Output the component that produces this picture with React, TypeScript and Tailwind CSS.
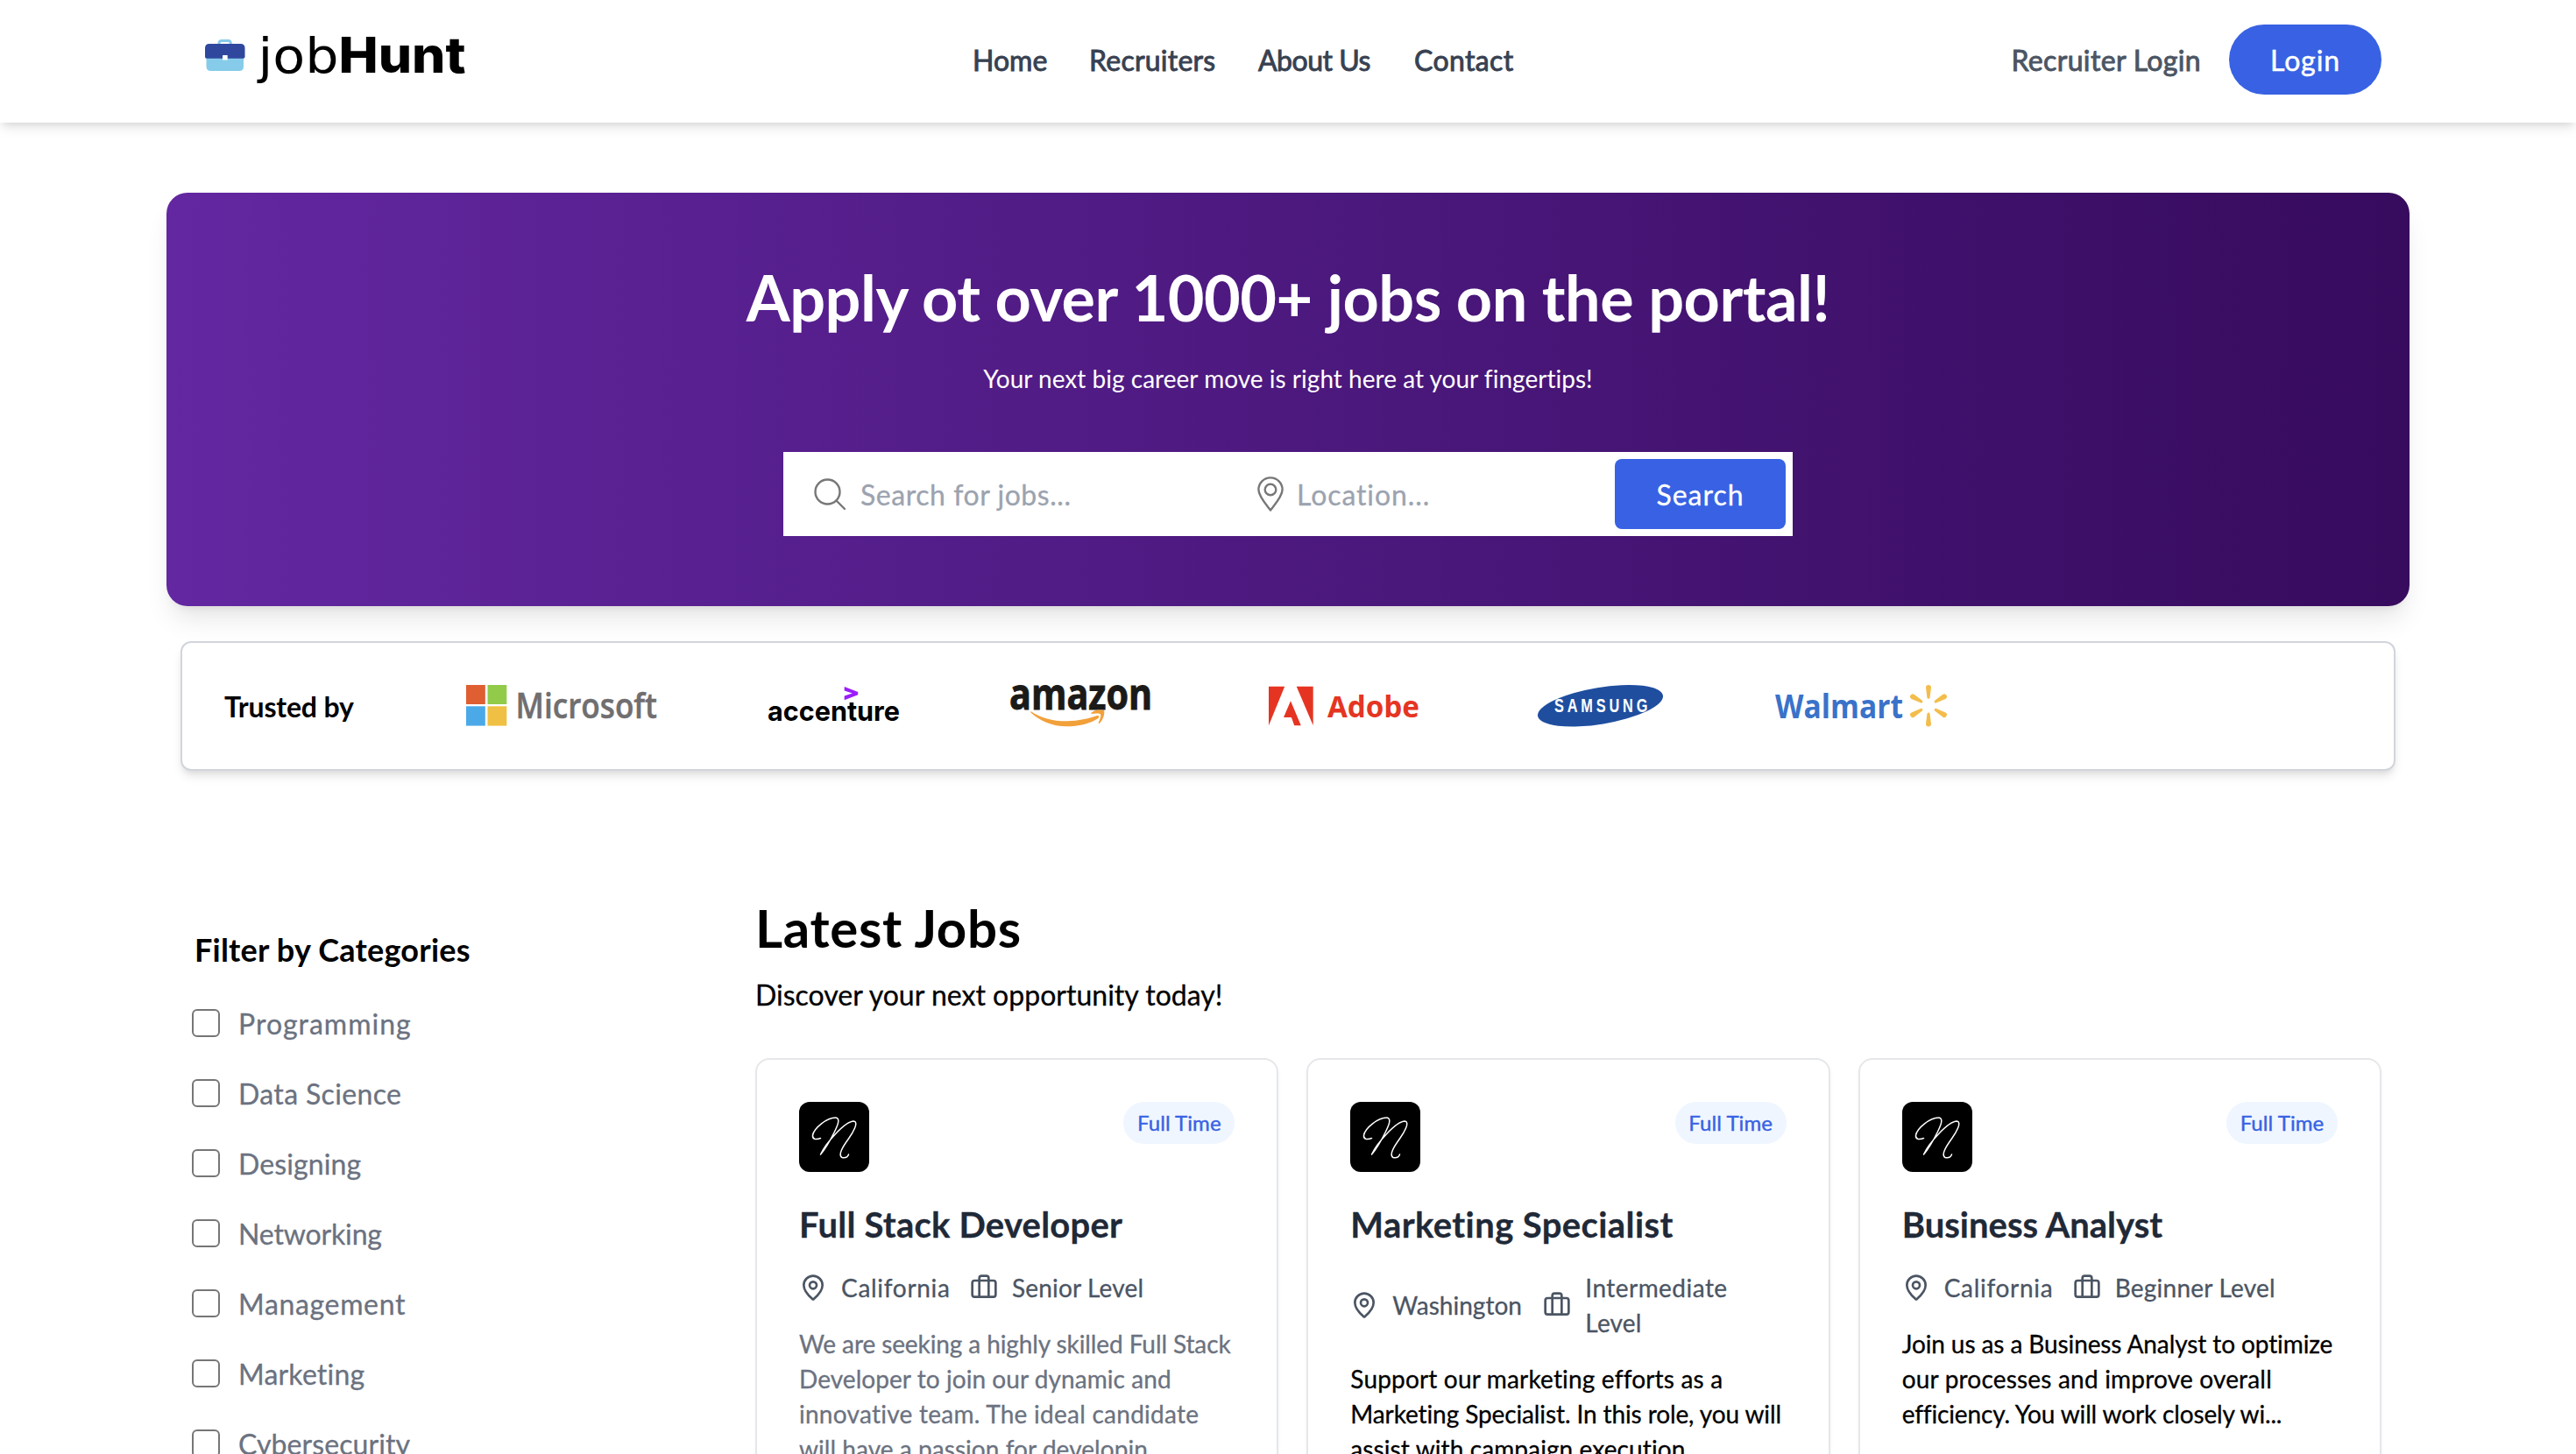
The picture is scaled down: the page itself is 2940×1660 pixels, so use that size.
import React from "react";

function Logo() {
  return (
    <svg width="300" height="64" viewBox="0 0 300 64" fill="none" className="overflow-visible">
      <g transform="translate(0 17)">
        <path d="M16 7V4.500Q16 1.500 19 1.500H26.500Q29.300 1.500 29.300 4.500V7" stroke="#86ccea" strokeWidth="3" />
        <path d="M1.500 20H44V31Q44 36 39 36H6.500Q1.500 36 1.500 31Z" fill="#86ccea" />
        <path d="M0 10Q0 5 5 5H40.500Q45.500 5 45.500 10V20Q45.500 21.800 43.500 21.800H2Q0 21.800 0 20Z" fill="#2f489e" />
        <rect x="20" y="18" width="5.700" height="5.600" rx="0.500" fill="#fff" />
      </g>
      <text x="60.500" y="54.500" fontSize="56" fill="#000" textLength="92" lengthAdjust="spacingAndGlyphs" className="font-['DejaVu_Sans',sans-serif]">job</text>
      <text x="152.500" y="54.500" fontSize="56" fontWeight="800" fill="#000" textLength="145" lengthAdjust="spacingAndGlyphs" className="font-['Inter',sans-serif]">Hunt</text>
    </svg>
  );
}

function SearchIcon() {
  return (
    <svg width="36" height="36" viewBox="0 0 36 36" fill="none" stroke="#777" strokeWidth="2.400" strokeLinecap="round">
      <circle cx="15.500" cy="15.500" r="14" />
      <path d="M25.500 25.500L35 35" />
    </svg>
  );
}

function PinIcon() {
  return (
    <svg width="30" height="40" viewBox="0 0 30 40" fill="none" stroke="#777" strokeWidth="2.400" strokeLinejoin="round">
      <path d="M15 38.500C10 32 1.400 22.500 1.400 15a13.600 13.600 0 0 1 27.200 0C28.600 22.500 20 32 15 38.500Z" />
      <circle cx="15" cy="15" r="6.300" />
    </svg>
  );
}

function MapPin() {
  return (
    <svg className="shrink-0" width="32" height="32" viewBox="0 0 24 24" fill="none" stroke="currentColor" strokeWidth="2" strokeLinecap="round" strokeLinejoin="round">
      <path d="M20 10c0 4.993-5.539 10.193-7.399 11.799a1 1 0 0 1-1.202 0C9.539 20.193 4 14.993 4 10a8 8 0 0 1 16 0" />
      <circle cx="12" cy="10" r="3" />
    </svg>
  );
}

function Suitcase() {
  return (
    <svg className="shrink-0" width="32" height="32" viewBox="0 0 24 24" fill="none" stroke="currentColor" strokeWidth="2" strokeLinecap="round" strokeLinejoin="round">
      <path d="M16 20V4a2 2 0 0 0-2-2h-4a2 2 0 0 0-2 2v16" />
      <rect width="20" height="14" x="2" y="6" rx="2" />
    </svg>
  );
}

function Microsoft() {
  return (
    <svg width="217" height="48" viewBox="0 0 217 48" className="overflow-visible">
      <rect width="21.800" height="22" fill="#df5e32" />
      <rect x="24.500" width="21.800" height="22" fill="#92cb49" />
      <rect y="24.300" width="21.800" height="22.300" fill="#4ca9e8" />
      <rect x="24.500" y="24.300" width="21.800" height="22.300" fill="#f0c044" />
      <text x="56.500" y="37.500" fontSize="39" fontWeight="600" fill="#706e6f" stroke="#706e6f" strokeWidth="0.500" textLength="161.500" lengthAdjust="spacingAndGlyphs" className="font-['Open_Sans',sans-serif]">Microsoft</text>
    </svg>
  );
}

function Accenture() {
  return (
    <svg width="149" height="48" viewBox="0 0 149 48" className="overflow-visible">
      <path d="M86.700 2L102.200 8V11.300L86.700 17.300V12.600L95.800 9.600L86.700 6.400Z" fill="#9b1dfb" />
      <text x="-1" y="41" fontSize="31.500" fontWeight="700" fill="#000" textLength="151" lengthAdjust="spacingAndGlyphs" className="font-['Inter',sans-serif]">accenture</text>
    </svg>
  );
}

function Amazon() {
  return (
    <svg width="158" height="48" viewBox="0 0 158 48" className="overflow-visible">
      <text x="-2" y="27.500" fontSize="48" fontWeight="700" fill="#1b1a18" stroke="#1b1a18" strokeWidth="1" textLength="163" lengthAdjust="spacingAndGlyphs" className="font-['Open_Sans',sans-serif]">amazon</text>
      <g fill="#f2a03a">
        <path d="M22.400 30C34 38 48 41.500 64 41.300C77 41 88 38.500 98 35C100.500 34.500 101 36.500 99.500 38C91 44 77 47.300 63 47.300C47 47.300 33 41 22.400 31.500Z" />
        <path d="M91 32.200C95 28 103 27.800 106.200 29.600C107 33 105 40 100.800 44C100 44.300 99.500 43.800 99.800 43C101.500 39 103 35 102 33.500C101 32 95 32.600 91.800 33Z" />
      </g>
    </svg>
  );
}

function Adobe() {
  return (
    <svg width="187" height="48" viewBox="0 0 187 48" className="overflow-visible" fill="#e53522">
      <path d="M8 1.700H26.200L8 46.200Z" />
      <path d="M39.700 1.700H58.700V46.200Z" />
      <path d="M33 18.300L44.800 46.200H37.200L33.900 37H25Z" />
      <text x="75" y="37.300" fontSize="34.500" fontWeight="700" textLength="105" lengthAdjust="spacingAndGlyphs" className="font-['Noto_Sans',sans-serif]">Adobe</text>
    </svg>
  );
}

function Samsung() {
  return (
    <svg width="143" height="48" viewBox="0 0 143 48" className="overflow-visible">
      <ellipse cx="71.500" cy="23.800" rx="72.400" ry="20.900" transform="rotate(-9.400 71.500 23.800)" fill="#1f4e9f" />
      <text transform="translate(19 31.200) scale(0.760 1)" fontSize="21.500" fontWeight="700" fill="#fff" textLength="140" lengthAdjust="spacing" className="font-['Liberation_Sans',sans-serif]">SAMSUNG</text>
    </svg>
  );
}

function Walmart() {
  return (
    <svg width="196" height="48" viewBox="0 0 196 48" className="overflow-visible">
      <text x="0" y="37.500" fontSize="38" fontWeight="700" fill="#3a72c9" textLength="146" lengthAdjust="spacingAndGlyphs" className="font-['Open_Sans',sans-serif]">Walmart</text>
      <g fill="#f3bd4c">
        {[0, 60, 120, 180, 240, 300].map((a) => (
          <path key={a} transform={`rotate(${a} 175 23.700)`} d="M172 3a3 3 0 0 1 6 0L176.600 14.200a1.600 1.600 0 0 1-3.200 0Z" />
        ))}
      </g>
    </svg>
  );
}

function SignatureN() {
  return (
    <svg width="80" height="80" viewBox="0 0 80 80" fill="none" className="rounded-xl bg-black">
      <path
        d="M24.500 41.500C19.500 43.500 15 43 15.500 38C17 30 32 17.500 42 18C47.500 19 44 27 40 35C35 45 29 55 24.500 60C30 48 52 22 62.500 22C68.500 23 61.500 35 56.500 42C50 51 44 60.500 49 63.500C53 64.200 55.500 63 56.500 60"
        stroke="#fff"
        strokeWidth="1.500"
        strokeLinecap="round"
        strokeLinejoin="round"
      />
    </svg>
  );
}

const categories: [string, string][] = [
  ["Programming", "tracking-[0.99px]"],
  ["Data Science", "tracking-[0.35px]"],
  ["Designing", "tracking-[0.1px]"],
  ["Networking", "tracking-[-0.15px]"],
  ["Management", "tracking-[0.66px]"],
  ["Marketing", "tracking-[0.19px]"],
  ["Cybersecurity", "tracking-[0.1px]"],
];

type Line = [string, string];
type Job = { title: Line; place: Line; level: Line[]; tone: string; text: Line[] };

const jobs: Job[] = [
  {
    title: ["Full Stack Developer", "tracking-[0.22px]"],
    place: ["California", "w-[123px] tracking-[0.7px]"],
    level: [["Senior Level", "tracking-[0.17px]"]],
    tone: "text-[#6b7280]",
    text: [
      ["We are seeking a highly skilled Full Stack", "tracking-[-0.1px]"],
      ["Developer to join our dynamic and", "tracking-[0.06px]"],
      ["innovative team. The ideal candidate", "tracking-[0.26px]"],
      ["will have a passion for developin...", "tracking-[0.05px]"],
    ],
  },
  {
    title: ["Marketing Specialist", "tracking-[0.4px]"],
    place: ["Washington", "w-[148px] tracking-[0.02px]"],
    level: [
      ["Intermediate", "tracking-[0.46px]"],
      ["Level", "tracking-[0.2px]"],
    ],
    tone: "text-black",
    text: [
      ["Support our marketing efforts as a", "tracking-[0.17px]"],
      ["Marketing Specialist. In this role, you will", "tracking-[-0.11px]"],
      ["assist with campaign execution...", "tracking-[0.1px]"],
    ],
  },
  {
    title: ["Business Analyst", "tracking-[0.01px]"],
    place: ["California", "w-[123px] tracking-[0.7px]"],
    level: [["Beginner Level", "tracking-[0.23px]"]],
    tone: "text-black",
    text: [
      ["Join us as a Business Analyst to optimize", "tracking-[-0.1px]"],
      ["our processes and improve overall", "tracking-[0.19px]"],
      ["efficiency. You will work closely wi...", "tracking-[-0.15px]"],
    ],
  },
];

function JobCard({ job }: { job: Job }) {
  return (
    <article className="h-[640px] rounded-2xl border-2 border-[#e5e7eb] bg-white p-12 shadow-[0_2px_4px_rgba(0,0,0,0.04)]">
      <div className="flex items-start justify-between">
        <SignatureN />
        <span className="flex h-12 w-[127px] items-center justify-center rounded-full bg-[#eff6ff] text-[24px] tracking-[0.07px] text-[#3862e3] [-webkit-text-stroke:0.4px]">
          Full Time
        </span>
      </div>
      <h3 className={`mt-8 text-[40px] leading-[56px] font-bold text-[#1f2937] [-webkit-text-stroke:0.3px] ${job.title[1]}`}>{job.title[0]}</h3>
      <div className="mt-6 flex items-center text-[28px] leading-10 text-[#4b5563] [-webkit-text-stroke:0.3px]">
        <MapPin />
        <span className={`ml-4 shrink-0 ${job.place[1]}`}>{job.place[0]}</span>
        <span className="ml-6 flex">
          <Suitcase />
        </span>
        <span className="ml-4">
          {job.level.map(([t, c]) => (
            <span key={t} className={`block ${c}`}>{t}</span>
          ))}
        </span>
      </div>
      <p className={`mt-6 text-[28px] leading-10 whitespace-nowrap [-webkit-text-stroke:0.3px] ${job.tone}`}>
        {job.text.map(([t, c]) => (
          <span key={t} className={`block ${c}`}>{t}</span>
        ))}
      </p>
    </article>
  );
}

export default function App() {
  return (
    <div className="h-[1660px] w-[2940px] overflow-hidden bg-white font-['Lato',sans-serif] text-black">
      <header className="h-[140px] pt-7 shadow-[0_8px_12px_-2px_rgba(0,0,0,0.1),0_4px_8px_-4px_rgba(0,0,0,0.1)]">
        <div className="flex h-20 items-center pr-[222px] pl-[234px]">
          <div className="flex h-20 w-[876px] items-start">
            <Logo />
          </div>
          <nav className="flex pt-0.5 text-[32px] leading-[48px] text-[#374151] [-webkit-text-stroke:0.9px]">
            <a className="w-[133px]">Home</a>
            <a className="w-[193px] tracking-[0.24px]">Recruiters</a>
            <a className="w-[178px] tracking-[-0.48px]">About Us</a>
            <a className="tracking-[0.37px]">Contact</a>
          </nav>
          <div className="ml-auto flex items-center text-[32px] leading-[48px]">
            <a className="mr-8 pt-0.5 tracking-[0.35px] text-[#4b5563] [-webkit-text-stroke:0.9px]">Recruiter Login</a>
            <button className="h-20 w-[174px] rounded-full bg-[#3862e3] pt-0.5 tracking-[0.9px] text-white [-webkit-text-stroke:0.5px]">Login</button>
          </div>
        </div>
      </header>

      <section className="mx-[190px] mt-20 flex h-[472px] flex-col items-center rounded-3xl bg-gradient-to-r from-[#6327a1] to-[#370b5e] pt-[79px] text-white shadow-[0_20px_30px_-6px_rgba(0,0,0,0.1),0_8px_12px_-8px_rgba(0,0,0,0.1)]">
        <h1 className="text-[72px] leading-[80px] font-bold tracking-[-0.5px]">Apply ot over 1000+ jobs on the portal!</h1>
        <p className="mt-[33px] text-[28px] leading-10 tracking-[0.02px]">Your next big career move is right here at your fingertips!</p>
        <div className="mt-16 flex h-24 w-[1152px] items-center bg-white pr-2 pl-[35px] text-[32px] leading-[48px] text-[#9ca3af] [-webkit-text-stroke:0.3px]">
          <div className="flex w-[506px] items-center">
            <SearchIcon />
            <span className="ml-[17px] pt-0.5 tracking-[0.55px]">Search for jobs...</span>
          </div>
          <PinIcon />
          <span className="ml-[15px] pt-0.5 tracking-[0.9px]">Location...</span>
          <button className="ml-auto h-20 w-[195px] rounded-lg bg-[#3862e3] pt-0.5 tracking-[0.95px] text-white">Search</button>
        </div>
      </section>

      <section className="mx-[206px] mt-10 flex h-[148px] items-center gap-32 rounded-xl border-2 border-[#d1d5db] bg-white px-12 shadow-[0_8px_12px_-2px_rgba(0,0,0,0.1),0_4px_8px_-4px_rgba(0,0,0,0.1)]">
        <span className="w-[148px] pt-px text-[32px] leading-[48px] font-bold tracking-[-0.18px] whitespace-nowrap">Trusted by</span>
        <Microsoft />
        <Accenture />
        <Amazon />
        <Adobe />
        <Samsung />
        <Walmart />
      </section>

      <main className="mx-[219px] flex">
        <aside className="w-[643px] shrink-0 pt-[176px]">
          <h2 className="ml-[3px] text-[36px] leading-[56px] font-bold tracking-[0.22px]">Filter by Categories</h2>
          <ul className="mt-4">
            {categories.map(([name, c]) => (
              <li key={name} className="flex h-20 items-center">
                <span className="size-8 rounded-[6px] border-2 border-[#767676] bg-white" />
                <span className={`ml-[21px] pt-0.5 text-[32px] leading-[48px] text-[#6b7280] [-webkit-text-stroke:0.3px] ${c}`}>{name}</span>
              </li>
            ))}
          </ul>
        </aside>
        <div className="w-[1856px] shrink-0 pt-[143px]">
          <h2 className="text-[60px] leading-[72px] font-bold tracking-[0.65px]">Latest Jobs</h2>
          <p className="mt-[17px] text-[32px] leading-[48px] tracking-[0.01px] [-webkit-text-stroke:0.3px]">Discover your next opportunity today!</p>
          <div className="mt-12 grid grid-cols-3 gap-8">
            {jobs.map((job) => (
              <JobCard key={job.title[0]} job={job} />
            ))}
          </div>
        </div>
      </main>
    </div>
  );
}
